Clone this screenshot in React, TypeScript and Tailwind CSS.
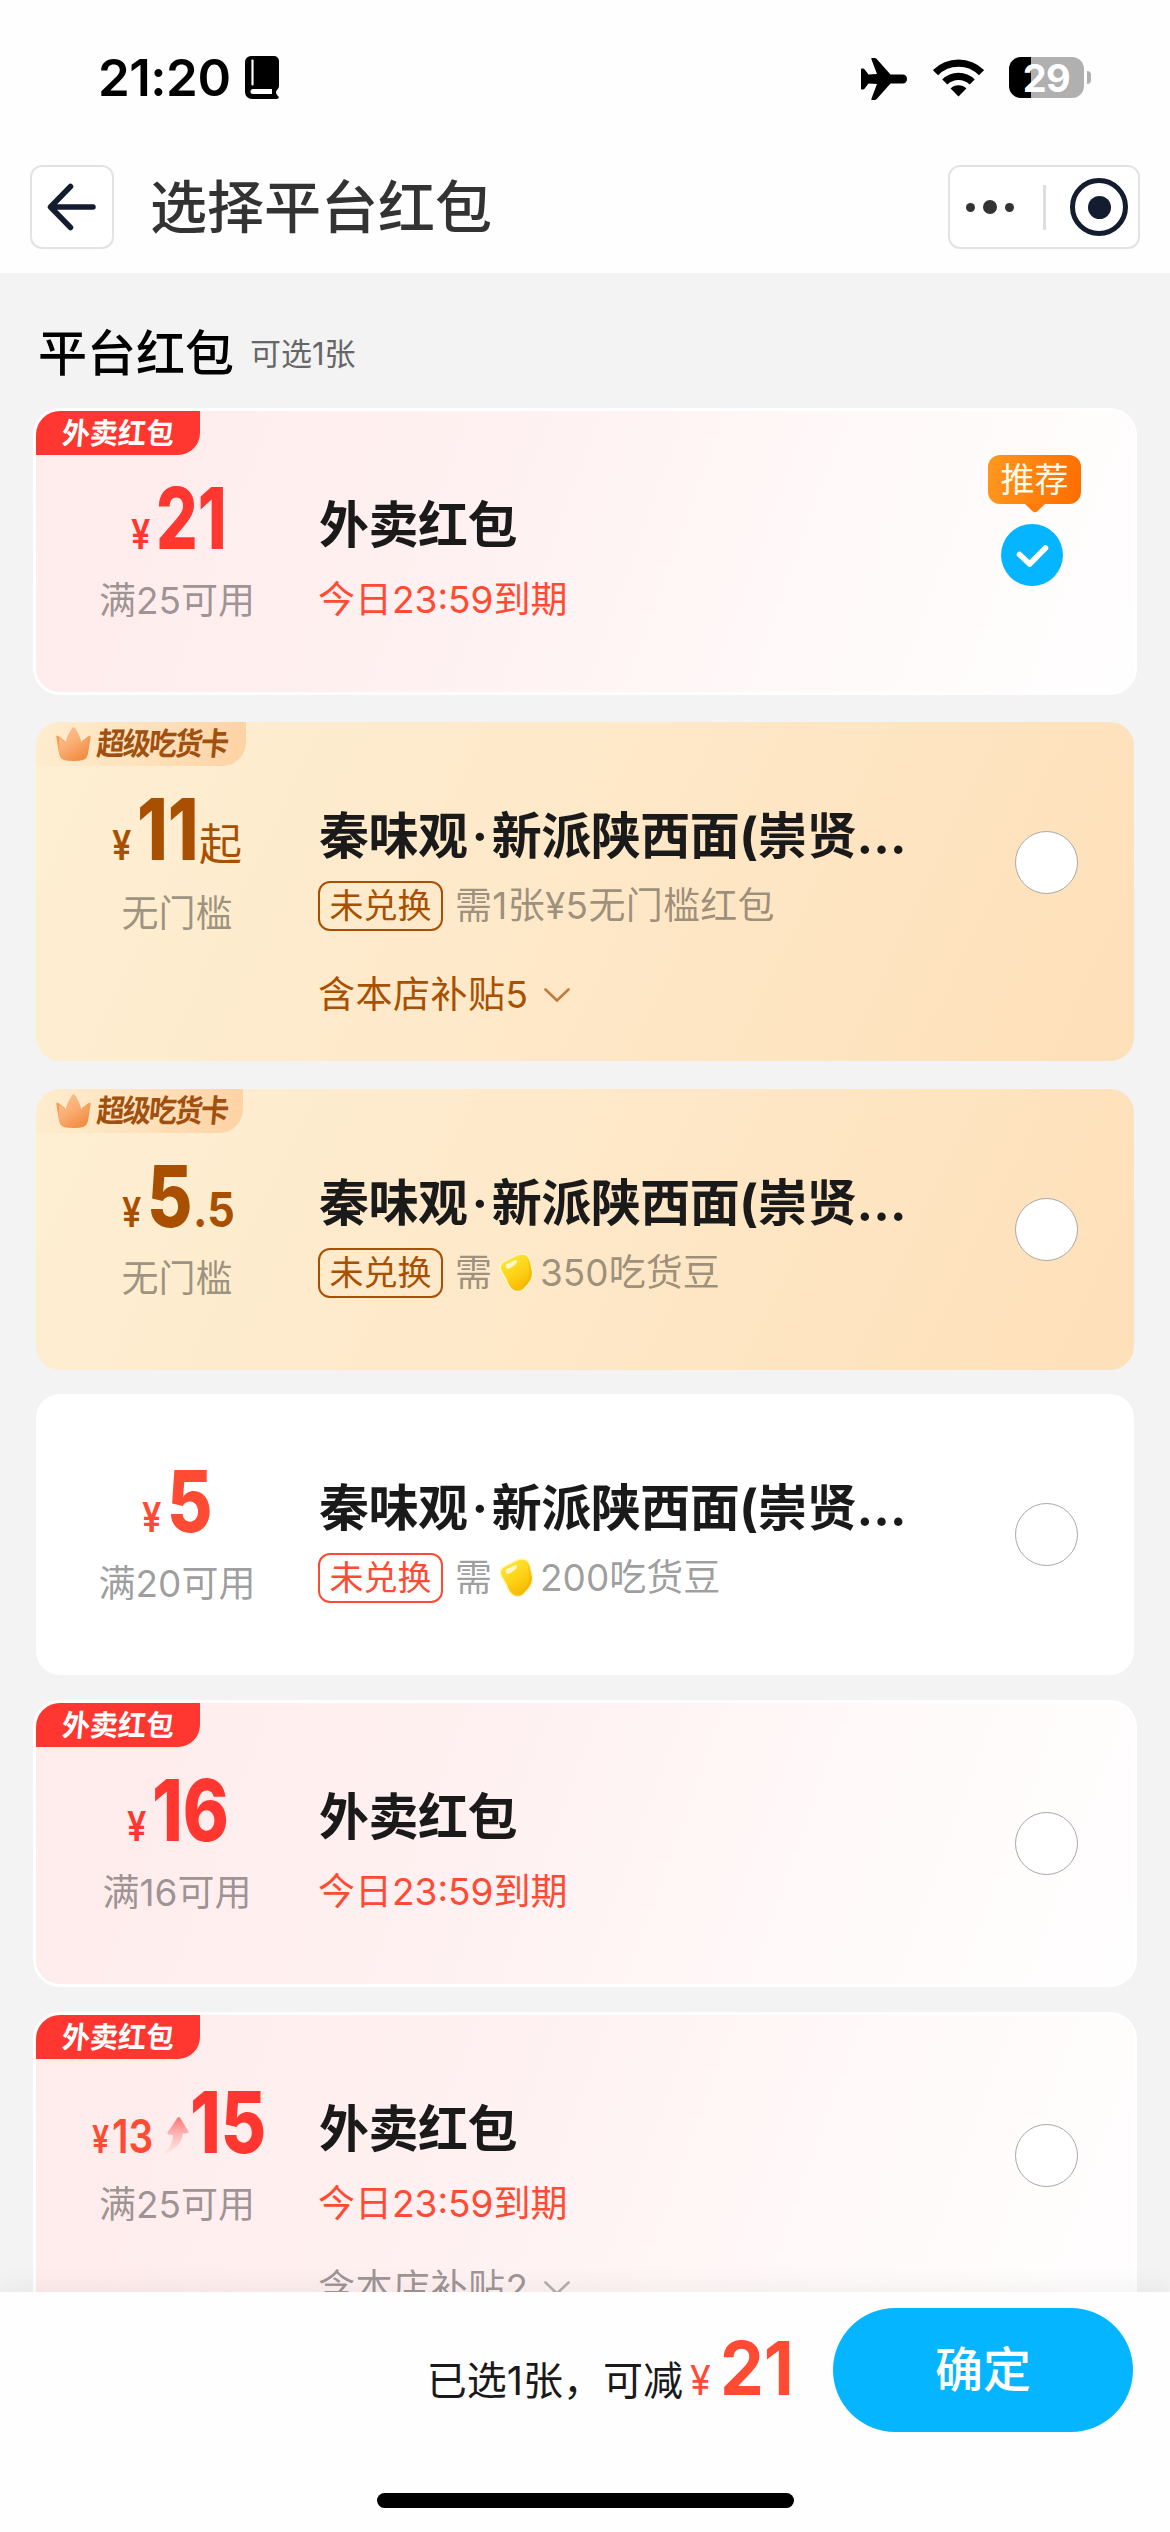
import { useState, type ReactNode } from "react";
import clsx from "clsx";

type Theme = "red" | "gold" | "plain";

interface Coupon {
  id: number;
  theme: Theme;
  // top margin, width of the squeezed amount
  gap: string;
  amount: string;
  amountWidth: string;
  prefix?: string;
  suffix?: string;
  condition: string;
  title: string;
  expires?: string;
  need?: string;
  beans?: string;
  subsidy?: string;
  badgeWidth?: string;
  recommended?: boolean;
}

const SHOP = "秦味观·新派陕西面(崇贤…";

const COUPONS: Coupon[] = [
  {
    id: 1,
    theme: "red",
    gap: "mt-0",
    amount: "21",
    amountWidth: "w-[68px]",
    condition: "满25可用",
    title: "外卖红包",
    expires: "今日23:59到期",
    recommended: true,
  },
  {
    id: 2,
    theme: "gold",
    gap: "mt-[30px]",
    amount: "11",
    amountWidth: "w-[62px]",
    suffix: "起",
    condition: "无门槛",
    title: SHOP,
    need: "需1张¥5无门槛红包",
    subsidy: "含本店补贴5",
    badgeWidth: "w-[210px]",
  },
  {
    id: 3,
    theme: "gold",
    gap: "mt-7",
    amount: "5",
    amountWidth: "w-[46px]",
    suffix: ".5",
    condition: "无门槛",
    title: SHOP,
    beans: "350吃货豆",
    badgeWidth: "w-[207px]",
  },
  {
    id: 4,
    theme: "plain",
    gap: "mt-6",
    amount: "5",
    amountWidth: "w-[45px]",
    condition: "满20可用",
    title: SHOP,
    beans: "200吃货豆",
  },
  {
    id: 5,
    theme: "red",
    gap: "mt-7",
    amount: "16",
    amountWidth: "w-[76px]",
    condition: "满16可用",
    title: "外卖红包",
    expires: "今日23:59到期",
  },
  {
    id: 6,
    theme: "red",
    gap: "mt-[31px]",
    prefix: "13",
    amount: "15",
    amountWidth: "w-[72px]",
    condition: "满25可用",
    title: "外卖红包",
    expires: "今日23:59到期",
    subsidy: "含本店补贴2",
  },
];

export default function App() {
  const [selected, setSelected] = useState(1);

  return (
    <div className="flex h-[2532px] w-[1170px] flex-col overflow-hidden bg-[#f3f3f3] font-[Inter,'Noto_Sans_CJK_SC',sans-serif] text-[#1a1a1a]">
      <header className="h-[273px] shrink-0 bg-[#fefefe]">
        <StatusBar />
        <NavBar />
      </header>

      <main className="min-h-0 flex-1 overflow-hidden px-9">
        <div className="mt-[51px] flex h-[60px] items-center">
          <h2 className="pl-0.5 text-[49px] font-medium leading-[60px] text-black">
            平台红包
          </h2>
          <span className="ml-4 text-[31px] leading-[60px] text-[#666]">
            可选1张
          </span>
        </div>
        <div className="mt-[27px] flex flex-col">
          {COUPONS.map((coupon) => (
            <CouponCard
              key={coupon.id}
              coupon={coupon}
              checked={selected === coupon.id}
              onSelect={() => setSelected(coupon.id)}
            />
          ))}
        </div>
      </main>

      <footer className="relative z-10 h-[240px] shrink-0 bg-[#fefefe] shadow-[0_-6px_24px_rgba(0,0,0,0.05)]">
        <div className="flex h-[156px] items-center justify-end pr-[37px]">
          <div className="mb-[5px] mr-[39px] flex h-[60px] items-baseline">
            <span className="text-[40px] leading-[60px]">已选1张，可减</span>
            <Squeezed
              width="ml-[7px] w-[30px]"
              text="text-[41px] font-normal text-[#ff4b33]"
              scale="scale-x-[0.92]"
            >
              ¥
            </Squeezed>
            <Squeezed
              width="w-[74px]"
              text="text-[74px] font-bold leading-[60px] text-[#ff4b33]"
              scale="scale-x-[0.94]"
            >
              21
            </Squeezed>
          </div>
          <button className="h-[124px] w-[300px] rounded-full bg-[#06b5ff] text-[48px] font-medium text-white">
            确定
          </button>
        </div>
        <div className="mx-auto mt-[45px] h-[15px] w-[417px] rounded-full bg-black" />
      </footer>
    </div>
  );
}

function StatusBar() {
  return (
    <div className="flex h-[165px] items-start pl-[98px] pr-[79px] pt-14">
      <span className="text-[51px] font-semibold leading-[44px] tracking-[-0.5px] text-black">
        21:20
      </span>
      <svg viewBox="0 0 34 43" className="ml-3.5 h-[43px] w-[34px]">
        <path
          d="M6 0h23a5 5 0 0 1 5 5v25q0 2-2 4t0 5l1.500 1.500q1 2.500-2 2.500H7a7 7 0 0 1-7-7V6a6 6 0 0 1 6-6z"
          fill="#000"
        />
        <path d="M7.500 4.500v24" stroke="#fff" strokeWidth="2.200" strokeLinecap="round" />
        <path d="M8 33h19v5H8a2.500 2.500 0 0 1 0-5z" fill="#fff" />
      </svg>

      <div className="ml-auto flex items-start">
        <svg viewBox="0 0 46 42" className="mt-0.5 h-[42px] w-[46px]">
          <path
            d="M41.500 16.500c3 0 4.500 2 4.500 4.500s-1.500 4.500-4.500 4.500H29.500L15.500 41.200q-.8.800-2 .8H11q-1 0-.6-1.200L16 26l-8.500-.6-3.800 5.200q-.7 1-1.700 1H.8q-.8 0-.8-1V11.400q0-1 .8-1H2q1 0 1.700 1l3.800 5.200L16 16 10.400 1.200Q10 0 11 0h2.500q1.200 0 2 .8l14 15.700z"
            fill="#000"
          />
        </svg>
        <svg viewBox="0 0 51 38" className="ml-[26px] mt-[3px] h-[38px] w-[51px]">
          <g fill="none" stroke="#000" strokeWidth="7.200">
            <path d="M2.500 13.700a32.500 32.500 0 0 1 46 0" />
            <path d="M11.800 23a19.400 19.400 0 0 1 27.400 0" />
          </g>
          <path d="M25.500 37.500 17.600 29.600a11.200 11.200 0 0 1 15.800 0z" fill="#000" />
        </svg>
        <div className="ml-[25px] mt-px flex items-center">
          <div className="h-[41px] w-[75px] rounded-[12px] bg-[linear-gradient(90deg,#000_22px,#b0b0b0_22px)]">
            <span className="block text-center text-[38px] font-bold leading-[42px] tracking-[-0.5px] text-white">
              29
            </span>
          </div>
          <div className="ml-[3px] h-[13px] w-1 rounded-r-full bg-[#b0b0b0]" />
        </div>
      </div>
    </div>
  );
}

function NavBar() {
  return (
    <div className="flex h-[84px] items-center px-[30px]">
      <button className="flex size-[84px] items-center justify-center rounded-[12px] border-2 border-[#e3e3e3] bg-white">
        <svg viewBox="0 0 50 50" className="size-[50px]">
          <path
            d="M46 25H4M23.500 4.500 3.500 25l20 20.500"
            fill="none"
            stroke="#141c30"
            strokeWidth="5.500"
            strokeLinecap="round"
            strokeLinejoin="round"
          />
        </svg>
      </button>
      <h1 className="ml-9 mt-0.5 text-[57px] font-medium leading-[84px] text-[#333]">
        选择平台红包
      </h1>
      <div className="ml-auto flex h-[84px] w-[192px] items-center rounded-[12px] border-2 border-[#e3e3e3] bg-white pl-4 pr-[10px]">
        <div className="flex items-center gap-2">
          <i className="size-[9px] rounded-full bg-[#333]" />
          <i className="size-[14px] rounded-full bg-[#333]" />
          <i className="size-[9px] rounded-full bg-[#333]" />
        </div>
        <div className="ml-[29px] h-[45px] w-[3px] bg-[#dedede]" />
        <div className="ml-auto flex size-[58px] items-center justify-center rounded-full border-[5px] border-[#141c30]">
          <i className="size-[23px] rounded-full bg-[#141c30]" />
        </div>
      </div>
    </div>
  );
}

// Digits are drawn narrower than the font's own; the box keeps the visual width.
function Squeezed({
  width,
  text,
  scale,
  children,
}: {
  width: string;
  text: string;
  scale: string;
  children: ReactNode;
}) {
  return (
    <span className={clsx("inline-block whitespace-nowrap", width, text)}>
      <span className={clsx("inline-block origin-left", scale)}>{children}</span>
    </span>
  );
}

function CouponTitle({ title }: { title: string }) {
  const [brand, rest] = title.split("·");
  return (
    <h3 className="whitespace-nowrap pl-px text-[50px] font-bold leading-[60px] tracking-[-0.5px]">
      {brand}
      {rest && <span className="mx-[4px]">·</span>}
      {rest}
    </h3>
  );
}

function CouponCard({
  coupon,
  checked,
  onSelect,
}: {
  coupon: Coupon;
  checked: boolean;
  onSelect: () => void;
}) {
  const { theme } = coupon;
  const accent =
    theme === "gold"
      ? "text-[#a85000]"
      : theme === "red"
        ? "text-[#ff3730]"
        : "text-[#ff4b33]";

  return (
    <section
      className={clsx(
        "relative flex shrink-0 rounded-[24px]",
        coupon.gap,
        coupon.subsidy ? "h-[339px]" : "h-[281px]",
        theme === "red" &&
          "bg-[linear-gradient(110deg,#ffebec_0%,#fff2f2_45%,#fffafa_75%,#fffefe_100%)] shadow-[0_0_0_3px_#fff]",
        theme === "gold" &&
          "bg-[linear-gradient(115deg,#feefd3_0%,#fee8c8_50%,#fee0b9_100%)]",
        theme === "plain" && "bg-white"
      )}
    >
      {theme === "red" && (
        <div className="absolute left-0 top-0 flex h-11 w-[164px] items-center justify-center rounded-br-[22px] rounded-tl-[24px] bg-[#ff3730]">
          <span className="-skew-x-[5deg] scale-y-[1.06] text-[28px] font-bold leading-[44px] text-white">
            外卖红包
          </span>
        </div>
      )}
      {theme === "gold" && (
        <div
          className={clsx(
            "absolute left-0 top-0 flex h-11 items-center rounded-br-[24px] rounded-tl-[24px] bg-[linear-gradient(100deg,#feedcf_0%,#fee2bd_50%,#fed2a3_100%)] pl-[20px]",
            coupon.badgeWidth
          )}
        >
          <Crown />
          <span className="ml-1.5 -skew-x-[6deg] scale-y-[1.12] text-[28px] font-bold leading-[44px] tracking-[-2px] text-[#a0500f]">
            超级吃货卡
          </span>
        </div>
      )}

      <div className={clsx("w-[282px] shrink-0 pt-[66px]", accent)}>
        <div className="flex h-[84px] items-baseline justify-center leading-[84px]">
          {coupon.prefix && (
            <>
              <Squeezed
                width="w-[20px]"
                text="text-[38px] font-semibold text-[#ff4b33]"
                scale="scale-x-[0.8]"
              >
                ¥
              </Squeezed>
              <Squeezed
                width="w-[44px]"
                text="text-[47px] font-semibold text-[#ff4b33]"
                scale="scale-x-[0.83]"
              >
                {coupon.prefix}
              </Squeezed>
              <RiseArrow />
            </>
          )}
          {!coupon.prefix && (
            <Squeezed
              width="w-[25px]"
              text="text-[41px] font-semibold"
              scale="scale-x-[0.84]"
            >
              ¥
            </Squeezed>
          )}
          <Squeezed
            width={coupon.amountWidth}
            text="text-[85px] font-extrabold"
            scale={coupon.amount === "21" ? "scale-x-[0.77]" : "scale-x-[0.82]"}
          >
            {coupon.amount}
          </Squeezed>
          {coupon.suffix === "起" && <span className="text-[43px]">起</span>}
          {coupon.suffix === ".5" && (
            <Squeezed
              width="w-[40px]"
              text="text-[48px] font-bold"
              scale="scale-x-[0.9]"
            >
              .5
            </Squeezed>
          )}
        </div>
        <p
          className={clsx(
            "text-center text-[37px] leading-[50px] text-black/40",
            coupon.suffix === "起" ? "mt-[17px]" : "mt-[15px]"
          )}
        >
          {coupon.condition}
        </p>
      </div>

      <div className="min-w-0 flex-1 pt-[84px]">
        <CouponTitle title={coupon.title} />
        {coupon.expires ? (
          <p className="mt-5 text-[37px] leading-[50px] text-[#ff4b33]">
            {coupon.expires}
          </p>
        ) : (
          <div className="mt-[15px] flex h-[50px] items-center">
            <span
              className={clsx(
                "flex h-[50px] w-[125px] items-center justify-center rounded-[12px] border-2 border-current text-[34px] leading-[46px]",
                accent
              )}
            >
              未兑换
            </span>
            {coupon.need && (
              <span className="ml-3 text-[37px] tracking-[0.3px] text-black/40">
                {coupon.need}
              </span>
            )}
            {coupon.beans && (
              <span className="ml-3 flex items-center text-[37px] text-black/40">
                需
                <Bean />
                {coupon.beans}
              </span>
            )}
          </div>
        )}
        {coupon.subsidy && (
          <div
            className={clsx(
              "flex h-[50px] items-center text-[37px] tracking-[0.5px]",
              theme === "gold"
                ? "mt-[39px] text-[#a85000]"
                : "mt-[34px] text-black/40"
            )}
          >
            {coupon.subsidy}
            <svg viewBox="0 0 26 14" className="ml-[15px] h-[14px] w-[26px] opacity-70">
              <path
                d="M1.500 1.500 13 12.500l11.500-11"
                fill="none"
                stroke="currentColor"
                strokeWidth="2.600"
                strokeLinecap="round"
              />
            </svg>
          </div>
        )}
      </div>

      <div className="flex w-[119px] shrink-0 flex-col">
        {coupon.recommended ? (
          <div className="ml-[-27px] mt-11 flex w-[93px] flex-col items-center">
            <span className="flex h-[49px] w-[93px] items-center justify-center rounded-[12px] bg-[linear-gradient(100deg,#ff981f,#ff6d00)] text-[34px] text-[#fffbe8]">
              推荐
            </span>
            <svg viewBox="0 0 20 9" className="h-[9px] w-[20px]">
              <path d="M0 0h20l-7.500 7.200q-2.500 2.200-5 0z" fill="#ff7c0c" />
            </svg>
            <button onClick={onSelect} className="mr-[6px] mt-[11px]">
              <Radio checked={checked} />
            </button>
          </div>
        ) : (
          <button onClick={onSelect} className="mt-[109px] w-[63px]">
            <Radio checked={checked} />
          </button>
        )}
      </div>
    </section>
  );
}

function Radio({ checked }: { checked: boolean }) {
  if (!checked) {
    return (
      <span className="block size-[63px] rounded-full border border-[#a8a8a8] bg-white" />
    );
  }
  return (
    <svg viewBox="0 0 62 62" className="block size-[62px]">
      <circle cx="31" cy="31" r="31" fill="#06b5ff" />
      <path
        d="m18.500 30.500 10.200 9.500 15.800-16"
        fill="none"
        stroke="#fff"
        strokeWidth="5.600"
        strokeLinecap="round"
        strokeLinejoin="round"
      />
    </svg>
  );
}

function Crown() {
  return (
    <svg viewBox="0 0 35 35" className="h-[35px] w-[35px]">
      <defs>
        <linearGradient id="crownSide" x1="0" y1="0" x2="0" y2="1">
          <stop offset="0" stopColor="#f5a55f" />
          <stop offset="1" stopColor="#e87f2c" />
        </linearGradient>
        <linearGradient id="crownMid" x1="0" y1="0" x2="0.600" y2="1">
          <stop offset="0" stopColor="#fdc195" />
          <stop offset="0.500" stopColor="#fbb077" />
          <stop offset="1" stopColor="#f28f45" />
        </linearGradient>
      </defs>
      <path
        d="M.3 10Q0 7.500 2.500 9L9 14l3 8-2 10H8.500Q4 31.500 3 26zM34.700 10q.3-2.500-2.200-1L26 14l-3 8 2 10h1.500q4.500-.5 5.500-6z"
        fill="url(#crownSide)"
      />
      <path
        d="M16 1.200q1.500-2 3 0 4.500 6 6.500 14.800 3-4 6-5Q33.500 21 31 29.500q-1 4.500-13.500 4.500T4 29.500Q1.500 21 3.500 11q3 1 6 5Q11.500 7.200 16 1.200z"
        fill="url(#crownMid)"
      />
    </svg>
  );
}

function Bean() {
  return (
    <svg viewBox="0 0 36 40" className="mx-[6px] h-[40px] w-[36px]">
      <defs>
        <linearGradient id="bean" x1="0.200" y1="0" x2="0.700" y2="1">
          <stop offset="0" stopColor="#ffe93b" />
          <stop offset="0.550" stopColor="#fdd115" />
          <stop offset="1" stopColor="#f7b500" />
        </linearGradient>
      </defs>
      <path
        d="M19 2Q29-1 31.500 6L34.500 18q1 7-4 13l-5 5.500q-6 4-11.500 0-4-3-6-10L2.500 17Q1 11 6 8.500z"
        fill="url(#bean)"
        stroke="#fff6c8"
        strokeWidth="1.500"
      />
      <path
        d="M29.500 5q2.500 10 1.500 17-2 8-10 12.500 9-1.500 12-9.500 1.500-6-1-16z"
        fill="#f5ac00"
        opacity="0.450"
      />
      <path d="M8 11.500 17.500 7q2 0 1.500 2-2 4-9 7-3-.5-2-4.500z" fill="#fffbe0" opacity="0.900" />
    </svg>
  );
}

function RiseArrow() {
  return (
    <svg viewBox="0 0 24 37" className="ml-[9px] mr-px mt-[36px] h-[37px] w-[24px] self-start">
      <defs>
        <linearGradient id="rise" x1="0" y1="0" x2="0" y2="1">
          <stop offset="0" stopColor="#ff7474" />
          <stop offset="1" stopColor="#ffd8d8" stopOpacity="0.500" />
        </linearGradient>
      </defs>
      <path
        d="M12.500.8q1.300-1.400 2.600 0L23.300 14q.8 2-1.300 2.300l-4.300.2Q17 29 1 36.700q-1.300 0-.7-1.300Q8 27 8 17.800l-4-.1q-2.200-.4-1.300-2.400z"
        fill="url(#rise)"
      />
    </svg>
  );
}
